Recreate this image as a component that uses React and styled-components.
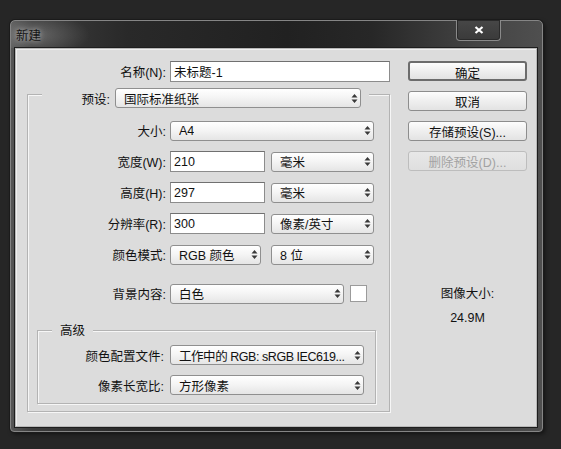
import React from "react";
import styled, { createGlobalStyle } from "styled-components";

const GlobalStyle = createGlobalStyle`
  html, body {
    margin: 0;
    background: #262626;
  }
  body {
    font-family: "Liberation Sans", "Noto Sans CJK SC", sans-serif;
    font-size: 12.5px;
    color: #111;
  }
`;

const Page = styled.div`
  padding: 20px 0 0 10px;
  height: 449px;
  box-sizing: border-box;
`;

const Window = styled.div`
  width: 533px;
  height: 412px;
  box-sizing: border-box;
  display: flex;
  flex-direction: column;
  border: 1px solid #858585;
  border-radius: 5px 5px 4px 4px;
  background: linear-gradient(90deg, #575757 0%, #3c3c3c 4%, #292929 22%, #212121 52%, #272727 68%, #444 88%, #4f4f4f 100%);
  box-shadow: 0 0 0 1px #1b1b1b, 2px 2px 4px rgba(0, 0, 0, 0.5);
`;

const TitleBar = styled.div`
  height: 27px;
  flex-shrink: 0;
  display: flex;
  align-items: center;
  justify-content: space-between;
  padding-left: 5px;
  background: radial-gradient(ellipse 55px 22px at 24px 14px, rgba(255, 255, 255, 0.22), transparent);
`;

const Title = styled.span`
  font-size: 12.5px;
  color: #151515;
  text-shadow: 0 0 5px rgba(255, 255, 255, 0.45), 0 0 10px rgba(255, 255, 255, 0.25);
`;

const CloseButton = styled.div`
  align-self: flex-start;
  margin: -1px 41px 0 0;
  width: 45px;
  height: 21px;
  box-sizing: border-box;
  display: flex;
  align-items: center;
  justify-content: center;
  border: 1px solid #8a8a8a;
  border-top: none;
  border-radius: 0 0 4px 4px;
  background: linear-gradient(#474747, #3a3a3a);
  box-shadow: inset 0 0 0 1px #2a2a2a;
`;

const Client = styled.div`
  flex: 1;
  margin: 0 5px 4px 4px;
  background: #dcdcdc;
  border: 1px solid #b8b8b8;
  box-shadow: 0 0 0 1px #1e1e1e, inset 1px 1px 0 #efefef;
  padding-top: 12px;
  display: flex;
  align-items: flex-start;
`;

const LeftPane = styled.div`
  width: 375px;
  display: flex;
  flex-direction: column;
  align-items: flex-start;
`;

const Row = styled.div`
  display: flex;
  align-items: center;
  height: ${(p) => p.$h || 21}px;
  gap: ${(p) => (p.$gap === undefined ? 4 : p.$gap)}px;
`;

const Label = styled.span`
  width: ${(p) => p.$w}px;
  flex-shrink: 0;
  text-align: right;
  white-space: nowrap;
`;

const TextField = styled.input`
  width: ${(p) => p.$w}px;
  height: 21px;
  box-sizing: border-box;
  margin: 0;
  padding: 0 3px;
  border: 1px solid #8c8c8c;
  border-top-color: #707070;
  background: #fff;
  font: inherit;
  color: #111;
  outline: none;
  flex-shrink: 0;
`;

const SelectBox = styled.div`
  width: ${(p) => p.$w}px;
  height: 20px;
  box-sizing: border-box;
  flex-shrink: 0;
  margin-left: ${(p) => p.$ml || 0}px;
  display: flex;
  align-items: center;
  justify-content: space-between;
  gap: 2px;
  padding: 0 2px 0 8px;
  border: 1px solid #8f8f8f;
  border-radius: 3px;
  background: linear-gradient(#ffffff, #f5f5f5 45%, #e5e5e5);
`;

const SelectText = styled.span`
  overflow: hidden;
  white-space: nowrap;
  letter-spacing: ${(p) => (p.$tight ? "-0.45px" : "normal")};
`;

const Arrows = () => (
  <svg width="7" height="11" viewBox="0 0 7 11" style={{ flexShrink: 0 }}>
    <path d="M3.5 1 L6.5 4.5 H0.5 Z M3.5 10 L6.5 6.5 H0.5 Z" fill="#3a3a3a" />
  </svg>
);

function Select({ w, ml, tight, children }) {
  return (
    <SelectBox $w={w} $ml={ml}>
      <SelectText $tight={tight}>{children}</SelectText>
      <Arrows />
    </SelectBox>
  );
}

const GroupBox = styled.div`
  margin: 12px 0 0 11px;
  width: 363px;
  box-sizing: border-box;
  border: 1px solid #b3b3b3;
  box-shadow: 1px 1px 0 #f6f6f6, inset 1px 1px 0 #f6f6f6;
  display: flex;
  flex-direction: column;
  align-items: flex-start;
  padding-bottom: 7px;
`;

const PresetLegend = styled.div`
  display: flex;
  align-items: center;
  gap: 5px;
  margin: -7px 0 0 14px;
  padding-right: 8px;
  background: #dcdcdc;
`;

const GroupBody = styled.div`
  display: flex;
  flex-direction: column;
  gap: 10px;
  margin-top: 12px;
`;

const BackgroundRow = styled(Row)`
  margin-top: 18px;
`;

const Swatch = styled.div`
  width: 17px;
  height: 17px;
  box-sizing: border-box;
  margin-left: 2px;
  border: 1px solid #9b9b9b;
  background: #fff;
`;

const AdvancedBox = styled.div`
  margin: 26px 0 0 9px;
  width: 339px;
  box-sizing: border-box;
  border: 1px solid #b3b3b3;
  box-shadow: 1px 1px 0 #f6f6f6, inset 1px 1px 0 #f6f6f6;
  display: flex;
  flex-direction: column;
  align-items: flex-start;
  gap: 10px;
  padding-bottom: 8px;
`;

const AdvancedLegend = styled.div`
  margin: -8px 0 -4px 14px;
  padding: 0 8px;
  line-height: 16px;
  background: #dcdcdc;
`;

const SidePane = styled.div`
  width: 119px;
  margin-left: 17px;
  display: flex;
  flex-direction: column;
  gap: 10px;
`;

const Button = styled.button`
  width: 119px;
  height: 20px;
  box-sizing: border-box;
  margin: 0;
  padding: 0;
  font: inherit;
  color: ${(p) => (p.disabled ? "#a2a2a2" : "#111")};
  border: ${(p) => (p.$primary ? "2px solid #6c6c6c" : "1px solid #8d8d8d")};
  border-color: ${(p) => (p.disabled ? "#bdbdbd" : undefined)};
  border-radius: 3px;
  background: ${(p) =>
    p.disabled
      ? "linear-gradient(#e8e8e8, #dfdfdf)"
      : "linear-gradient(#fdfdfd, #efefef 50%, #e3e3e3)"};
`;

const SizeInfo = styled.div`
  margin-top: 105px;
  display: flex;
  flex-direction: column;
  align-items: center;
  gap: 8px;
  line-height: 16px;
`;

export default function App() {
  return (
    <Page>
      <GlobalStyle />
      <Window>
        <TitleBar>
          <Title>新建</Title>
          <CloseButton>
            <svg width="10" height="8" viewBox="0 0 10 8">
              <path d="M1.5 1 L8.5 7 M8.5 1 L1.5 7" stroke="#fff" strokeWidth="2.2" />
            </svg>
          </CloseButton>
        </TitleBar>
        <Client>
          <LeftPane>
            <Row>
              <Label $w={150}>名称(N):</Label>
              <TextField $w={220} readOnly value="未标题-1" />
            </Row>
            <GroupBox>
              <PresetLegend>
                <Label $w={68}>预设:</Label>
                <Select w={246}>国际标准纸张</Select>
              </PresetLegend>
              <GroupBody>
                <Row>
                  <Label $w={138}>大小:</Label>
                  <Select w={204}>A4</Select>
                </Row>
                <Row>
                  <Label $w={138}>宽度(W):</Label>
                  <TextField $w={95} readOnly value="210" />
                  <Select w={103} ml={2}>毫米</Select>
                </Row>
                <Row>
                  <Label $w={138}>高度(H):</Label>
                  <TextField $w={95} readOnly value="297" />
                  <Select w={103} ml={2}>毫米</Select>
                </Row>
                <Row>
                  <Label $w={138}>分辨率(R):</Label>
                  <TextField $w={95} readOnly value="300" />
                  <Select w={103} ml={2}>像素/英寸</Select>
                </Row>
                <Row>
                  <Label $w={138}>颜色模式:</Label>
                  <Select w={91}>RGB 颜色</Select>
                  <Select w={103} ml={6}>8 位</Select>
                </Row>
              </GroupBody>
              <BackgroundRow>
                <Label $w={138}>背景内容:</Label>
                <Select w={174}>白色</Select>
                <Swatch />
              </BackgroundRow>
              <AdvancedBox>
                <AdvancedLegend>高级</AdvancedLegend>
                <Row $h={20} $gap={6}>
                  <Label $w={126}>颜色配置文件:</Label>
                  <Select w={194} tight>工作中的 RGB: sRGB IEC619...</Select>
                </Row>
                <Row $h={20} $gap={6}>
                  <Label $w={126}>像素长宽比:</Label>
                  <Select w={194}>方形像素</Select>
                </Row>
              </AdvancedBox>
            </GroupBox>
          </LeftPane>
          <SidePane>
            <Button $primary>确定</Button>
            <Button>取消</Button>
            <Button>存储预设(S)...</Button>
            <Button disabled>删除预设(D)...</Button>
            <SizeInfo>
              <span>图像大小:</span>
              <span>24.9M</span>
            </SizeInfo>
          </SidePane>
        </Client>
      </Window>
    </Page>
  );
}
